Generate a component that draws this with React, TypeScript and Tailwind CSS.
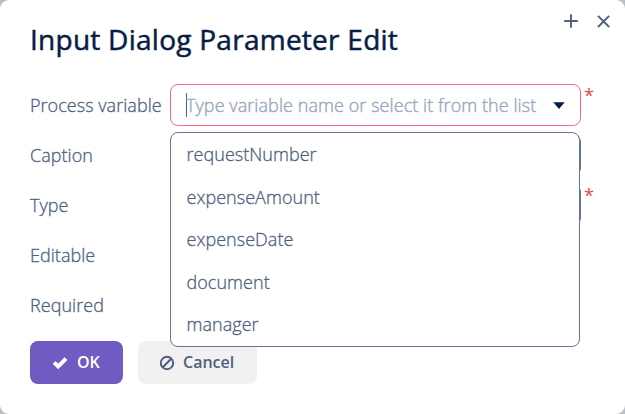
import React from "react";

const variables = ["requestNumber", "expenseAmount", "expenseDate", "document", "manager"];

function Row({ label, children, required }: { label: string; children?: React.ReactNode; required?: boolean }) {
  return (
    <div className="flex h-[42px] items-center">
      <label className="w-[140px] shrink-0 whitespace-nowrap text-[18px] font-light leading-6 tracking-[0.04px] [-webkit-text-stroke:0.3px_currentColor]">
        {label}
      </label>
      {children}
      {required && (
        <span className="ml-[3px] h-full w-3 shrink-0 text-[18px] leading-[23px] text-[#e5484d]">*</span>
      )}
    </div>
  );
}

function VariableMenu() {
  return (
    <ul className="absolute -left-px top-[47px] z-10 h-[215px] w-[410px] rounded-[8px] border border-[#647599] bg-white px-[15.5px]">
      {variables.map((name) => (
        <li
          key={name}
          className="h-[42.5px] text-[18px] font-light leading-[42.5px] tracking-[0.04px] [-webkit-text-stroke:0.3px_currentColor]"
        >
          {name}
        </li>
      ))}
    </ul>
  );
}

export default function App() {
  return (
    <div className="h-[414px] w-[625px] overflow-hidden bg-[#b9becb] font-['Open_Sans','Noto_Sans',sans-serif] text-[#4f5f7f]">
      <div className="relative h-full rounded-[9px] bg-white px-[30px] pt-[20px]">
        <div className="absolute right-[14px] top-[13px] flex gap-[16px]">
          <svg width="16" height="16" viewBox="0 0 16 16" fill="none" stroke="currentColor" strokeWidth="1.9">
            <path d="M1.2 8H14.8M8 1.2V14.8" />
          </svg>
          <svg width="16" height="16" viewBox="0 0 16 16" fill="none" stroke="currentColor" strokeWidth="1.9">
            <path d="M3 2.9L14.2 14M14.2 2.9L3 14" />
          </svg>
        </div>
        <h1 className="h-[40px] whitespace-nowrap text-[28px] font-normal leading-[39px] tracking-[0.26px] text-[#061d45] [-webkit-text-stroke:0.5px_currentColor]">
          Input Dialog Parameter Edit
        </h1>
        <div className="mt-[24px] flex flex-col gap-2">
          <Row label="Process variable" required>
            <div className="relative flex h-[42px] w-[411px] shrink-0 items-center rounded-[8px] border border-[#ff6680] pl-[15px]">
              <span className="h-6 w-px shrink-0 bg-[#4f5f7f]" />
              <span className="-ml-px w-[352px] shrink-0 overflow-hidden whitespace-nowrap text-[18px] font-light leading-6 tracking-[0.07px] text-[#9aa7c0] [-webkit-text-stroke:0.4px_currentColor]">
                Type variable name or select it from the list
              </span>
              <svg className="ml-[15px] shrink-0" width="12" height="7" viewBox="0 0 12 7" fill="#061d45">
                <path d="M.3 .3H11.7L6 6.9Z" />
              </svg>
              <VariableMenu />
            </div>
          </Row>
          <Row label="Caption">
            <div className="h-[42px] w-[411px] shrink-0 rounded-[8px] border border-[#647599]" />
          </Row>
          <Row label="Type" required>
            <div className="h-[42px] w-[411px] shrink-0 rounded-[8px] border border-[#647599]" />
          </Row>
          <Row label="Editable" />
          <Row label="Required" />
        </div>
        <div className="mt-[15px] flex gap-[15px] text-[16px] font-semibold leading-[43px]">
          <button className="flex h-[43px] w-[93px] items-center rounded-[8px] bg-[#6f5bc1] pl-[22px] text-white">
            <svg className="mr-[9px]" width="16" height="16" viewBox="0 0 16 16" fill="none" stroke="currentColor" strokeWidth="4">
              <path d="M2.1 7.4L6.2 11.5L14 3.7" />
            </svg>
            OK
          </button>
          <button className="flex h-[43px] w-[119px] items-center rounded-[8px] bg-[#f1f1f1] pl-[21px]">
            <svg className="mr-[8px]" width="16" height="16" viewBox="0 0 16 16" fill="none" stroke="currentColor" strokeWidth="2">
              <circle cx="8" cy="8" r="6.2" />
              <path d="M12.2 3.8L3.8 12.2" />
            </svg>
            Cancel
          </button>
        </div>
      </div>
    </div>
  );
}
